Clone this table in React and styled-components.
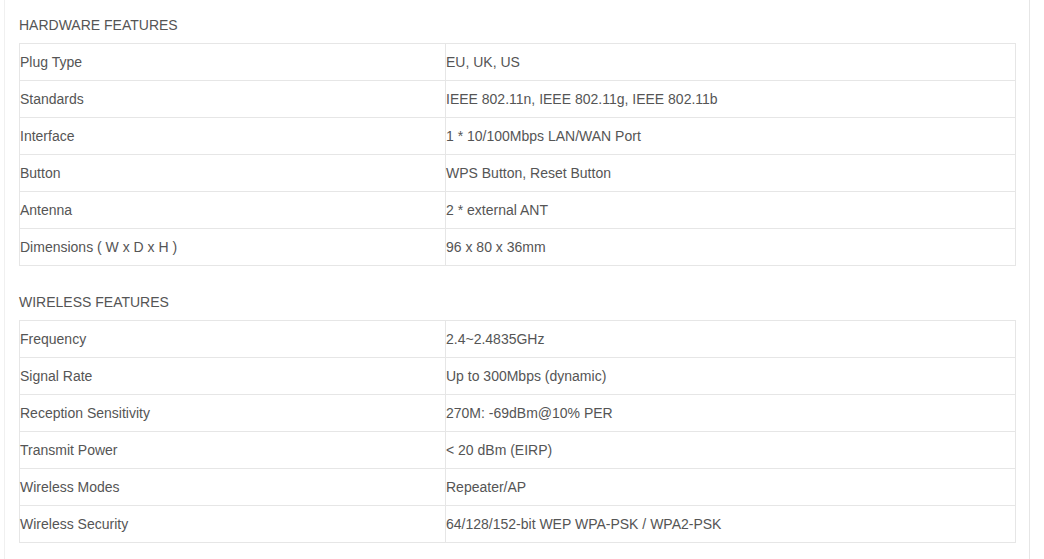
import React from "react";
import styled, { createGlobalStyle } from "styled-components";

const sections = [
  {
    title: "HARDWARE FEATURES",
    rows: [
      ["Plug Type", "EU, UK, US"],
      ["Standards", "IEEE 802.11n, IEEE 802.11g, IEEE 802.11b"],
      ["Interface", "1 * 10/100Mbps LAN/WAN Port"],
      ["Button", "WPS Button, Reset Button"],
      ["Antenna", "2 * external ANT"],
      ["Dimensions ( W x D x H )", "96 x 80 x 36mm"],
    ],
  },
  {
    title: "WIRELESS FEATURES",
    rows: [
      ["Frequency", "2.4~2.4835GHz"],
      ["Signal Rate", "Up to 300Mbps (dynamic)"],
      ["Reception Sensitivity", "270M: -69dBm@10% PER"],
      ["Transmit Power", "< 20 dBm (EIRP)"],
      ["Wireless Modes", "Repeater/AP"],
      ["Wireless Security", "64/128/152-bit WEP WPA-PSK / WPA2-PSK"],
    ],
  },
];

export default function App() {
  return (
    <>
      <Global />
      <Page>
        {sections.map((section) => (
          <Section key={section.title}>
            <Heading>{section.title}</Heading>
            <Table>
              <tbody>
                {section.rows.map(([label, value]) => (
                  <tr key={label}>
                    <Label>{label}</Label>
                    <Cell>{value}</Cell>
                  </tr>
                ))}
              </tbody>
            </Table>
          </Section>
        ))}
      </Page>
    </>
  );
}

const Global = createGlobalStyle`
  html, body {
    margin: 0;
    background: #fff;
  }
  body {
    font-family: "Liberation Sans", Arial, sans-serif;
  }
`;

const Page = styled.div`
  margin-left: 4px;
  width: 1026px;
  height: 559px;
  box-sizing: border-box;
  border-left: 1px solid #f0f0f0;
  border-right: 1px solid #e6e6e6;
  padding-left: 14px;
  color: #555;
  font-size: 14px;
`;

const Section = styled.section`
  & + & {
    margin-top: 11px;
  }
`;

const Heading = styled.h3`
  margin: 0;
  padding: 17px 0 10px 0;
  font-size: 14px;
  font-weight: normal;
  line-height: 16px;
  color: #555;
`;

const Table = styled.table`
  width: 997px;
  border-collapse: collapse;
  table-layout: fixed;
  td {
    border: 1px solid #e6e6e6;
    height: 36px;
    padding: 0;
    line-height: 16px;
    vertical-align: middle;
  }
`;

const Label = styled.td`
  width: 425px;
`;

const Cell = styled.td``;
